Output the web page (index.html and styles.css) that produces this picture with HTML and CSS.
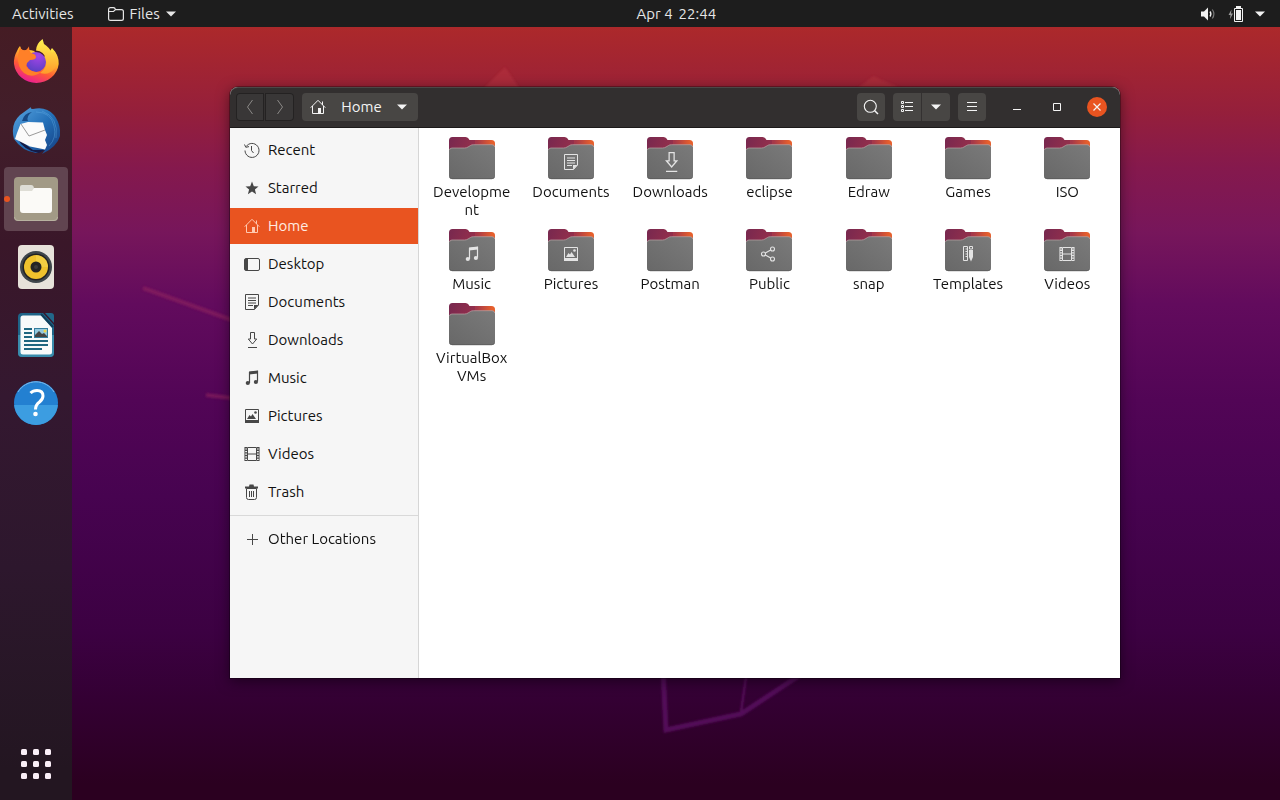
FILE: index.html
```html
<!DOCTYPE html>
<html lang="en">
<head>
<meta charset="utf-8">
<title>Home</title>
<link rel="stylesheet" href="styles.css">
</head>
<body>
<svg class="defs" width="0" height="0" aria-hidden="true">
  <defs>
    <linearGradient id="tab" x1="0" y1="0" x2="1" y2="0.2"><stop offset="0" stop-color="#77284f"/><stop offset="1" stop-color="#932f4c"/></linearGradient>
    <linearGradient id="back" x1="0" y1="0" x2="1" y2="0"><stop offset="0.35" stop-color="#a5384a"/><stop offset="0.9" stop-color="#e65f2c"/></linearGradient>
    <linearGradient id="front" x1="0" y1="1" x2="1" y2="0"><stop offset="0" stop-color="#686868"/><stop offset="1" stop-color="#7a7a7a"/></linearGradient>
  </defs>
  <symbol id="folder" viewBox="0 0 46 43">
    <path d="M18 3H42.500Q46 3 46 6.500V14H18Z" fill="url(#back)"/>
    <path d="M0 14V3.500Q0 0 3.500 0H16.500Q18.500 0 19.500 1.500L20.500 3H26V10L18 14Z" fill="url(#tab)"/>
    <path d="M0 13.500Q0 11 3 11H15.500Q17.500 11 19 10L21.500 8.500Q22.500 7.700 24.500 7.700H43Q46 7.700 46 10.700V38.500Q46 42 42.500 42H3.500Q0 42 0 38.500Z" fill="url(#front)"/>
    <path d="M.5 13Q.7 11 3 11H15.500Q17.500 11 19 10L21.500 8.500Q22.500 7.700 24.500 7.700H43Q45.500 7.700 45.700 10" fill="none" stroke="#b9a4a5" stroke-width=".7"/>
    <path d="M.3 39.500Q.6 41.800 3.500 41.800H42.500Q45.400 41.800 45.700 39.500" fill="none" stroke="#505050" stroke-width=".6"/>
  </symbol>
  <symbol id="recent" viewBox="0 0 16 16"><path d="M2.200 4.500A7 7 0 1 1 1 8.500M.5 2.500L1.800 5.300L5 4.600M7.500 4V8.500L9.500 11" fill="none" stroke="currentColor"/></symbol>
  <symbol id="star" viewBox="0 0 16 16"><path d="M8 1.500L9.800 6.200L14.500 6.400L10.900 9.500L12.100 14.300L8 11.600L3.900 14.300L5.100 9.500L1.500 6.400L6.200 6.200Z" fill="currentColor"/></symbol>
  <symbol id="home" viewBox="0 0 16 16"><path d="M.7 8.700L8 1.300L15.300 8.700M2.500 7V14.500H13.500V7M12.500 2.500V6" fill="none" stroke="currentColor"/><path d="M8 9H11V15H8Z" fill="currentColor"/></symbol>
  <symbol id="desktop" viewBox="0 0 16 16"><rect x=".5" y="2.500" width="15" height="12" rx="1.500" fill="none" stroke="currentColor"/><path d="M1 3H4V14H1Z" fill="currentColor"/></symbol>
  <symbol id="documents" viewBox="0 0 16 16"><path d="M1.500 .5H14.500V11L10.500 15.500H1.500ZM4 4H12M4 6.500H12M4 9H12M4 11.500H9" fill="none" stroke="currentColor"/><path d="M10 15.500V11H14.500Z" fill="currentColor"/></symbol>
  <symbol id="downloads" viewBox="0 0 16 16"><path d="M6.500 .5H10.500V7H12.700L8.500 12L4.300 7H6.500ZM4 15.500H13" fill="none" stroke="currentColor"/></symbol>
  <symbol id="music" viewBox="0 0 16 16"><path d="M5.500 13V2.500L13.500 1.500V11.500" fill="none" stroke="currentColor" stroke-width="1.200"/><path d="M5 1.500L14 .5V3.500L5 4.500Z" fill="currentColor"/><circle cx="3.800" cy="13" r="2.100" fill="currentColor"/><circle cx="11.900" cy="12" r="2.100" fill="currentColor"/></symbol>
  <symbol id="pictures" viewBox="0 0 16 16"><path d="M1.500 1.500H14.500V14H1.500Z" fill="none" stroke="currentColor"/><path d="M1 12H15V15H1ZM3 11L5.500 7L7 8.500L8.500 6L12 11Z" fill="currentColor"/><circle cx="11.500" cy="4.500" r="1.300" fill="currentColor"/></symbol>
  <symbol id="videos" viewBox="0 0 16 16"><path d="M3.500 1.500H12.500V14.500H3.500ZM3.500 8H12.500" fill="none" stroke="currentColor"/><path d="M2 1V15M14 1V15" stroke="currentColor" stroke-width="2" stroke-dasharray="1.400 1.200"/><path d="M.8 1V15M15.200 1V15" stroke="currentColor" stroke-width=".8"/></symbol>
  <symbol id="trash" viewBox="0 0 16 16"><path d="M2.500 4.500H12.500V13.500Q12.500 15.500 10.500 15.500H4.500Q2.500 15.500 2.500 13.500ZM5.500 7V13M7.500 7V13M9.500 7V13" fill="none" stroke="currentColor"/><path d="M1 2.500H5L5.500 .5H9.500L10 2.500H14V4.500H1Z" fill="currentColor"/></symbol>
  <symbol id="plus" viewBox="0 0 16 16"><path d="M8.500 3V14M3 8.500H14" stroke="currentColor"/></symbol>
  <symbol id="share" viewBox="0 0 16 16"><g fill="none" stroke="currentColor" stroke-width="1.100"><circle cx="3.500" cy="8" r="2"/><circle cx="12.500" cy="3" r="2"/><circle cx="12.500" cy="13" r="2"/><path d="M5.300 7L10.700 4M5.300 9L10.700 12"/></g></symbol>
  <symbol id="templates" viewBox="0 0 16 16"><path d="M3.500 .5H7.500V14.500H3.500ZM5.500 3H7.500M5.500 5.500H7.500M5.500 8H7.500M5.500 10.500H7.500" fill="none" stroke="currentColor"/><path d="M9.500 .5H12.500V3H9.500Z" fill="none" stroke="currentColor"/><path d="M9 4H13V11L11 15.500L9 11Z" fill="currentColor"/></symbol>
  <symbol id="caret" viewBox="0 0 10 6"><path d="M0 .5H10L5 5.500Z" fill="currentColor"/></symbol>
</svg>

<header class="topbar">
  <div class="topbar-left">
    <button class="panel-button">Activities</button>
    <button class="panel-button app-menu">
      <svg width="16" height="14" viewBox="0 0 16 14"><path d="M.6 11.500V2.500Q.6 .6 2.500 .6H5.500Q7 .6 7.500 2.600H13.500Q15.400 2.600 15.400 4.500V11.500Q15.400 13.400 13.500 13.400H2.500Q.6 13.400 .6 11.500ZM1 4.500H5.500L7.500 2.600" fill="none" stroke="currentColor" stroke-width="1.200"/></svg>
      <span>Files</span>
      <svg width="10" height="6"><use href="#caret"/></svg>
    </button>
  </div>
  <button class="panel-button clock"><span>Apr 4</span><span>22:44</span></button>
  <button class="panel-button status" aria-label="System menu">
    <svg width="16" height="14" viewBox="0 0 16 14"><path d="M0 4.500H3L7 .5V13.500L3 9.500H0Z" fill="currentColor"/><path d="M9 4.500Q10.800 7 9 9.500" fill="none" stroke="currentColor" stroke-width="1.300"/><path d="M11.300 2.500Q14.500 7 11.300 11.500" fill="none" stroke="#777" stroke-width="1.200"/></svg>
    <svg width="16" height="16" viewBox="0 0 16 16"><path d="M3.500 3.500L.5 9H2.500L2 13L5 7.500H3Z" fill="#999"/><path d="M6.500 2.500H14.500V15.500H6.500Z" fill="none" stroke="currentColor"/><path d="M8 0H13V2H8ZM8 4H13V14H8Z" fill="currentColor"/></svg>
    <svg width="10" height="6"><use href="#caret"/></svg>
  </button>
</header>

<main class="desktop">
  <svg class="wallpaper" viewBox="0 0 1280 800" preserveAspectRatio="xMidYMid slice" aria-hidden="true">
    <defs><filter id="soft"><feGaussianBlur stdDeviation="1"/></filter></defs>
    <g filter="url(#soft)">
      <path d="M480 92L505 67L522 92Z" fill="#bd3a45" opacity=".4"/>
      <path d="M855 90L873 76L905 90Z" fill="#bd3a45" opacity=".35"/>
      <path d="M143 288L240 323M206 395L240 399" stroke="#96245e" stroke-width="4" opacity=".55" fill="none"/>
      <path d="M663 670L666 730L741 714L800 675" stroke="#5b1060" stroke-width="5" opacity=".85" fill="none"/>
      <path d="M747 670L741 712" stroke="#5b1060" stroke-width="2" fill="none"/>
    </g>
  </svg>

  <nav class="dock" aria-label="Dock">
    <button class="launcher" aria-label="Firefox">
      <svg width="48" height="48" viewBox="0 0 48 48">
        <defs>
          <linearGradient id="fx" x1=".8" y1="0" x2=".3" y2="1"><stop offset="0" stop-color="#fff04a"/><stop offset=".35" stop-color="#ffb52c"/><stop offset=".65" stop-color="#ff5a36"/><stop offset="1" stop-color="#e8189b"/></linearGradient>
          <radialGradient id="globe" cx=".6" cy=".2" r=".9"><stop offset="0" stop-color="#a545e8"/><stop offset="1" stop-color="#533fc0"/></radialGradient>
          <linearGradient id="flame" x1="0" y1="0" x2="0" y2="1"><stop offset="0" stop-color="#fff44f"/><stop offset="1" stop-color="#ff9a2b"/></linearGradient>
        </defs>
        <path d="M8 7Q9 11 11 12Q17 10 22 12L30 20L38 12L40 9Q47 16 46.700 25A22.500 21.500 0 0 1 2 25Q1.500 18 5 12Q6 9 8 7Z" fill="url(#fx)"/>
        <circle cx="24" cy="23" r="10" fill="url(#globe)"/>
        <path d="M30.600 0Q24 5 24 11.500Q32 12 34 20Q36 29 28 34Q37 37 43 29Q48 19 42 12L40 14Q37 8 32 5Z" fill="url(#flame)"/>
        <path d="M8 8Q10 12 14 11Q17 8 17 7Q17 12 19 14Q24 15 24 18Q24 21 18 21Q15 23 14 27Q18 34 29 33Q20 40 12 34Q5 28 6 16Z" fill="#ff8028"/>
      </svg>
    </button>
    <button class="launcher" aria-label="Thunderbird">
      <svg width="48" height="48" viewBox="0 0 48 48">
        <defs><linearGradient id="tb" x1="0" y1="0" x2="1" y2="1"><stop offset="0" stop-color="#5aa5e0"/><stop offset=".5" stop-color="#2470b8"/><stop offset="1" stop-color="#143c80"/></linearGradient></defs>
        <path d="M2 32Q-2 17 8 8L19 0Q18 2 21 2Q34 -1 42 8Q49 17 48 29Q45 40 30 47L33 43L24 46Q10 44 2 32Z" fill="url(#tb)"/>
        <path d="M10 14Q12 6 20 5Q14 9 16 14Z" fill="#174a86"/>
        <path d="M24 5Q39 5 42 19Q45 31 37 39M30 4Q47 10 44 31" fill="none" stroke="#65afe5" opacity=".4"/>
        <path d="M5 31L21 43L33 43L27 46Q12 44 5 31Z" fill="#151b45"/>
        <path d="M8.500 17L16 15L31 15.500L33 23L35 28L33 33L35 38L33 42.500L18 39.500L3 32L5 26Z" fill="#fbfbfb"/>
        <path d="M9 17L17 29L33 23" fill="none" stroke="#9a9a9a"/>
      </svg>
    </button>
    <button class="launcher active" aria-label="Files">
      <svg width="48" height="48" viewBox="0 0 48 48"><rect x="2" y="2" width="44" height="44" rx="4" fill="#a29a86"/><path d="M2.500 42Q2.500 45.500 6 45.500H42Q45.500 45.500 45.500 42" fill="none" stroke="#b8b2a0"/><path d="M8 16V12Q8 10 10 10H19Q22 10 22 14V18H8Z" fill="#deddd5"/><path d="M8 16H20L22 13H38Q40 13 40 15V35Q40 38 37 38H11Q8 38 8 35Z" fill="#fbfaf7"/></svg>
    </button>
    <button class="launcher" aria-label="Rhythmbox">
      <svg width="48" height="48" viewBox="0 0 48 48"><rect x="6" y="2" width="36" height="44" rx="4" fill="#e7e2da"/><circle cx="24" cy="24" r="16" fill="#3f464b"/><circle cx="24" cy="24" r="13.500" fill="#222"/><circle cx="24" cy="24" r="12" fill="#efc22d"/><path d="M24 12A12 12 0 0 1 36 24L24 24Z" fill="#f8da58" opacity=".5"/><circle cx="24" cy="24" r="5.500" fill="#242424"/><circle cx="24" cy="24" r="2" fill="#3b3b3b"/></svg>
    </button>
    <button class="launcher" aria-label="LibreOffice Writer">
      <svg width="48" height="48" viewBox="0 0 48 48"><path d="M10 2H31L42 14V42Q42 46 38 46H10Q6 46 6 42V6Q6 2 10 2Z" fill="#1e6488"/><path d="M6 24H42V42Q42 46 38 46H10Q6 46 6 42Z" fill="#398cac"/><path d="M33 2H39Q42 2 42 5V12Z" fill="#226789"/><path d="M11 4.500H29L40 17V41Q40 43.500 37.500 43.500H11Q8.500 43.500 8.500 41V7Q8.500 4.500 11 4.500Z" fill="#f7fafa"/><path d="M29 3L41 16" stroke="#103d59" stroke-width="2"/><path d="M12 18H20M12 22H20M12 26H20M12 30H36M12 34H36M12 38H30" stroke="#1e6680" stroke-width="2"/><path d="M22 17H36V27H22Z" fill="#347e9d"/><path d="M23 18H35V26H23Z" fill="#93c9df"/><path d="M23 26V24L27 20L30 23L32 22L35 25V26Z" fill="#444"/><circle cx="33" cy="20" r="1.500" fill="#efd44b"/></svg>
    </button>
    <button class="launcher" aria-label="Help">
      <svg width="48" height="48" viewBox="0 0 48 48"><circle cx="24" cy="24" r="22" fill="#2380d1"/><path d="M2.100 26A22 22 0 0 0 45.900 26Z" fill="#3c9de1"/><path d="M6 13A21 21 0 0 1 42 13" fill="none" stroke="#7dbbed"/><path d="M18.500 14Q21 11.500 25 11.500Q31 11.500 31 17Q31 20 27.500 23Q23.500 26 23.500 30.500" fill="none" stroke="#fff" stroke-width="3"/><circle cx="23.500" cy="35" r="2.300" fill="#fff"/></svg>
    </button>
    <button class="launcher show-apps" aria-label="Show Applications">
      <svg width="48" height="48" viewBox="0 0 48 48" fill="#fbeff8"><g id="dots"><rect x="9" y="9" width="6" height="6" rx="1.500"/><rect x="21" y="9" width="6" height="6" rx="1.500"/><rect x="33" y="9" width="6" height="6" rx="1.500"/></g><use href="#dots" y="12"/><use href="#dots" y="24"/></svg>
    </button>
  </nav>

  <div class="workspace">
    <section class="window" aria-label="Home">
      <header class="titlebar">
        <div class="linked">
          <button class="tool dim" aria-label="Back"><svg width="16" height="16" viewBox="0 0 16 16"><path d="M10.500 1L5.500 8L10.500 15" fill="none" stroke="currentColor"/></svg></button>
          <button class="tool dim" aria-label="Forward"><svg width="16" height="16" viewBox="0 0 16 16"><path d="M5.500 1L10.500 8L5.500 15" fill="none" stroke="currentColor"/></svg></button>
        </div>
        <button class="tool path"><svg width="16" height="16"><use href="#home"/></svg><span>Home</span><svg width="10" height="6"><use href="#caret"/></svg></button>
        <div class="tools">
          <button class="tool" aria-label="Search"><svg width="16" height="16" viewBox="0 0 16 16"><circle cx="7.300" cy="7.300" r="6" fill="none" stroke="currentColor" stroke-width="1.100"/><path d="M11.500 11.500L15 15" stroke="currentColor" stroke-width="1.500"/></svg></button>
          <div class="linked">
            <button class="tool" aria-label="List view"><svg width="16" height="16" viewBox="0 0 16 16"><path d="M2.500 2.500H4.500V4.500H2.500ZM2.500 6.500H4.500V8.500H2.500ZM2.500 10.500H4.500V12.500H2.500ZM6 3.500H14M6 7.500H14M6 11.500H14" fill="none" stroke="currentColor"/></svg></button>
            <button class="tool" aria-label="View options"><svg width="10" height="6"><use href="#caret"/></svg></button>
          </div>
          <button class="tool" aria-label="Menu"><svg width="16" height="16" viewBox="0 0 16 16"><path d="M3 3.500H13M3 7.500H13M3 11.500H13" stroke="currentColor"/></svg></button>
        </div>
        <div class="window-controls">
          <button aria-label="Minimize"><svg width="16" height="16" viewBox="0 0 16 16"><path d="M4 10.500H12" stroke="currentColor"/></svg></button>
          <button aria-label="Maximize"><svg width="16" height="16" viewBox="0 0 16 16"><path d="M4.500 4.500H11.500V11.500H4.500Z" fill="none" stroke="currentColor"/></svg></button>
          <button class="close" aria-label="Close"><svg width="16" height="16" viewBox="0 0 16 16"><path d="M4.500 4.500L11.500 11.500M11.500 4.500L4.500 11.500" stroke="currentColor" stroke-width="1.200"/></svg></button>
        </div>
      </header>
      <div class="window-body">
        <nav class="sidebar" aria-label="Places">
          <a href="#"><svg width="16" height="16"><use href="#recent"/></svg>Recent</a>
          <a href="#"><svg width="16" height="16"><use href="#star"/></svg>Starred</a>
          <a href="#" class="selected" aria-current="page"><svg width="16" height="16"><use href="#home"/></svg>Home</a>
          <a href="#"><svg width="16" height="16"><use href="#desktop"/></svg>Desktop</a>
          <a href="#"><svg width="16" height="16"><use href="#documents"/></svg>Documents</a>
          <a href="#"><svg width="16" height="16"><use href="#downloads"/></svg>Downloads</a>
          <a href="#"><svg width="16" height="16"><use href="#music"/></svg>Music</a>
          <a href="#"><svg width="16" height="16"><use href="#pictures"/></svg>Pictures</a>
          <a href="#"><svg width="16" height="16"><use href="#videos"/></svg>Videos</a>
          <a href="#"><svg width="16" height="16"><use href="#trash"/></svg>Trash</a>
          <hr>
          <a href="#"><svg width="16" height="16"><use href="#plus"/></svg>Other Locations</a>
        </nav>
        <ul class="files">
          <li><svg class="folder" viewBox="0 0 46 43"><use href="#folder"/></svg><span>Development</span></li>
          <li><svg class="folder" viewBox="0 0 46 43"><use href="#folder"/><use href="#documents" x="15" y="17" width="16" height="16"/></svg><span>Documents</span></li>
          <li><svg class="folder" viewBox="0 0 46 43"><use href="#folder"/><use href="#downloads" x="14" y="15" width="20" height="20"/></svg><span>Downloads</span></li>
          <li><svg class="folder" viewBox="0 0 46 43"><use href="#folder"/></svg><span>eclipse</span></li>
          <li><svg class="folder" viewBox="0 0 46 43"><use href="#folder"/></svg><span>Edraw</span></li>
          <li><svg class="folder" viewBox="0 0 46 43"><use href="#folder"/></svg><span>Games</span></li>
          <li><svg class="folder" viewBox="0 0 46 43"><use href="#folder"/></svg><span>ISO</span></li>
          <li><svg class="folder" viewBox="0 0 46 43"><use href="#folder"/><use href="#music" x="15" y="17" width="16" height="16"/></svg><span>Music</span></li>
          <li><svg class="folder" viewBox="0 0 46 43"><use href="#folder"/><use href="#pictures" x="15" y="17" width="16" height="16"/></svg><span>Pictures</span></li>
          <li><svg class="folder" viewBox="0 0 46 43"><use href="#folder"/></svg><span>Postman</span></li>
          <li><svg class="folder" viewBox="0 0 46 43"><use href="#folder"/><use href="#share" x="14" y="17" width="16" height="16"/></svg><span>Public</span></li>
          <li><svg class="folder" viewBox="0 0 46 43"><use href="#folder"/></svg><span>snap</span></li>
          <li><svg class="folder" viewBox="0 0 46 43"><use href="#folder"/><use href="#templates" x="15" y="17" width="16" height="16"/></svg><span>Templates</span></li>
          <li><svg class="folder" viewBox="0 0 46 43"><use href="#folder"/><use href="#videos" x="15" y="17" width="16" height="16"/></svg><span>Videos</span></li>
          <li><svg class="folder" viewBox="0 0 46 43"><use href="#folder"/></svg><span>VirtualBox VMs</span></li>
        </ul>
      </div>
    </section>
  </div>
</main>
</body>
</html>
```
FILE: styles.css
```css
* { box-sizing: border-box; }

body {
  margin: 0;
  min-height: 100vh;
  display: flex;
  flex-direction: column;
  font-family: Ubuntu, "Noto Sans", sans-serif;
  font-size: 15px;
  line-height: 18px;
  color: #111;
  background: linear-gradient(#ad292a 3%, #951f3b 14%, #85194d 21%, #77165b 29%, #620b5d 38%, #520556 50%, #470350 62%, #3c0142 79%, #340034 87%, #2b0020 98%);
}

svg { display: block; flex: none; }

.defs { position: absolute; }

button {
  display: flex;
  align-items: center;
  justify-content: center;
  margin: 0;
  padding: 0;
  border: 0;
  background: none;
  color: inherit;
  font: inherit;
}

.topbar {
  position: relative;
  display: grid;
  grid-template-columns: calc(50% - 2px) auto 1fr;
  height: 27px;
  padding: 0 15px 0 12px;
  background: #1d1d1d;
  color: #e6e6e6;
}

.topbar-left { display: flex; gap: 34px; }
.app-menu { gap: 6px; }
.clock { gap: 6px; }
.status { justify-self: end; gap: 11px; color: #f2f2f2; }

.desktop { flex: 1; display: flex; }

.wallpaper {
  position: absolute;
  inset: 0;
  width: 100%;
  height: 100%;
  pointer-events: none;
}

.dock {
  position: relative;
  display: flex;
  flex-direction: column;
  gap: 4px;
  padding: 4px;
  background: linear-gradient(#451c24, #421e2a 12%, #3a1729 28%, #341830 48%, #2d172d 70%, #231621 96%);
}

.launcher {
  position: relative;
  width: 64px;
  height: 64px;
  border-radius: 4px;
}

.launcher.active { background: #614450; }

.launcher.active::before {
  content: "";
  position: absolute;
  left: 0;
  top: 29px;
  width: 6px;
  height: 6px;
  border-radius: 50%;
  background: #e95420;
}

.show-apps { margin-top: auto; }

.workspace { position: relative; flex: 1; }

.window {
  position: absolute;
  inset: 60px 160px 122px 158px;
  display: flex;
  flex-direction: column;
  border-radius: 8px 8px 0 0;
  background: #fff;
  box-shadow: 0 0 0 1px rgba(0, 0, 0, .3), 0 3px 14px rgba(0, 0, 0, .5);
}

.titlebar {
  display: flex;
  align-items: center;
  gap: 8px;
  height: 41px;
  padding: 0 13px 1px 6px;
  border-top: 1px solid #4b4747;
  border-bottom: 1px solid #1c1a1a;
  border-radius: 8px 8px 0 0;
  background: #322f2f;
  color: #f4f4f4;
}

.linked { display: flex; }

.tool {
  width: 28px;
  height: 28px;
  border-radius: 4px;
  background: #484644;
}

.linked .tool { width: 29px; }
.linked .tool:first-child { border-right: 1px solid #343131; border-radius: 4px 0 0 4px; }
.linked .tool:last-child { border-radius: 0 4px 4px 0; }
.tools .linked .tool:last-child { width: 28px; }
.tool.dim { background: #393737; color: #8b8987; box-shadow: inset 0 0 0 1px #242222; }

.tool.path {
  width: 116px;
  justify-content: space-between;
  padding: 0 11px 0 8px;
}

.tools { display: flex; gap: 8px; margin-left: auto; }

.window-controls { display: flex; gap: 20px; margin-left: 13px; }

.window-controls button {
  width: 20px;
  height: 20px;
  border-radius: 50%;
}

.window-controls .close { background: #e95420; }

.window-body { flex: 1; display: flex; }

.sidebar {
  flex: none;
  width: 189px;
  display: flex;
  flex-direction: column;
  gap: 2px;
  padding: 4px 0;
  border-right: 1px solid #d6d6d6;
  background: #f6f6f6;
}

.sidebar a {
  display: flex;
  align-items: center;
  gap: 8px;
  height: 36px;
  padding-left: 14px;
  color: #111;
  text-decoration: none;
}

.sidebar svg { color: #474747; }
.sidebar .selected { background: #e95420; color: #ffece2; }
.sidebar .selected svg { color: #ffc9b0; }

.sidebar hr {
  width: 100%;
  margin: 3px 0;
  border: 0;
  border-top: 1px solid #d9d9d9;
}

.files {
  flex: 1;
  display: grid;
  grid-template-columns: repeat(7, 1fr);
  align-content: start;
  gap: 10px 0;
  margin: 0;
  padding: 9px 3px;
  list-style: none;
}

.files li {
  display: flex;
  flex-direction: column;
  align-items: center;
  gap: 3px;
}

.files span {
  width: 80px;
  text-align: center;
  overflow-wrap: break-word;
}

.folder { width: 46px; height: 43px; color: #e4e4e4; }
```
